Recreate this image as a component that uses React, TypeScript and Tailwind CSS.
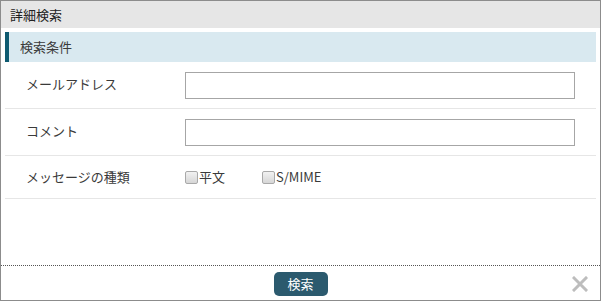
import { useState } from "react";

const Checkbox = ({ label, width }: { label: string; width?: string }) => (
  <label className={`flex items-center gap-[1px] cursor-pointer ${width ?? ""}`}>
    <span className="w-[13px] h-[13px] rounded-[2px] border border-[#a9a9a9] bg-gradient-to-b from-[#f2f2f2] to-[#d6d6d6]" />
    <span>{label}</span>
  </label>
);

export default function App() {
  const [mail, setMail] = useState("");
  const [comment, setComment] = useState("");

  return (
    <div
      className="w-[601px] h-[301px] flex flex-col border border-[#8c8c8c] bg-white text-[13px] text-[#3a3a3a]"
      style={{ fontFamily: '"Noto Sans CJK JP", "Noto Sans", sans-serif' }}
    >
      <div className="h-[27px] shrink-0 bg-[#e6e6e6] px-[9px] flex items-center text-[#222]">
        詳細検索
      </div>

      <div className="flex-1 px-[4px] pt-[4px]">
        <div className="h-[30px] bg-[#d9e9f0] border-l-4 border-[#0e5a70] pl-[11px] flex items-center">
          検索条件
        </div>

        <div className="h-[47px] flex items-center border-b border-[#e6e6e6]">
          <div className="w-[180px] pl-[21px] -mt-[2px]">メールアドレス</div>
          <input
            value={mail}
            onChange={(e) => setMail(e.target.value)}
            className="w-[390px] h-[27px] border border-[#a6a6a6] outline-none px-1"
          />
        </div>

        <div className="h-[47px] flex items-center border-b border-[#e6e6e6]">
          <div className="w-[180px] pl-[21px] -mt-[2px]">コメント</div>
          <input
            value={comment}
            onChange={(e) => setComment(e.target.value)}
            className="w-[390px] h-[27px] border border-[#a6a6a6] outline-none px-1"
          />
        </div>

        <div className="h-[43px] flex items-center border-b border-[#e6e6e6]">
          <div className="w-[180px] pl-[21px]">メッセージの種類</div>
          <div className="flex items-center">
            <Checkbox label="平文" width="w-[77px]" />
            <Checkbox label="S/MIME" />
          </div>
        </div>
      </div>

      <div className="h-[35px] shrink-0 border-t border-dotted border-[#555] relative flex items-center justify-center">
        <button className="w-[54px] h-[24px] rounded-[5px] bg-[#2b5a6e] text-white text-[13px] mt-[1px]">
          検索
        </button>
        <svg
          className="absolute right-[12px] top-[10px]"
          width="16"
          height="16"
          viewBox="0 0 16 16"
        >
          <path d="M2 2 L14 14 M14 2 L2 14" stroke="#bdbdbd" strokeWidth="3" strokeLinecap="square" />
        </svg>
      </div>
    </div>
  );
}
